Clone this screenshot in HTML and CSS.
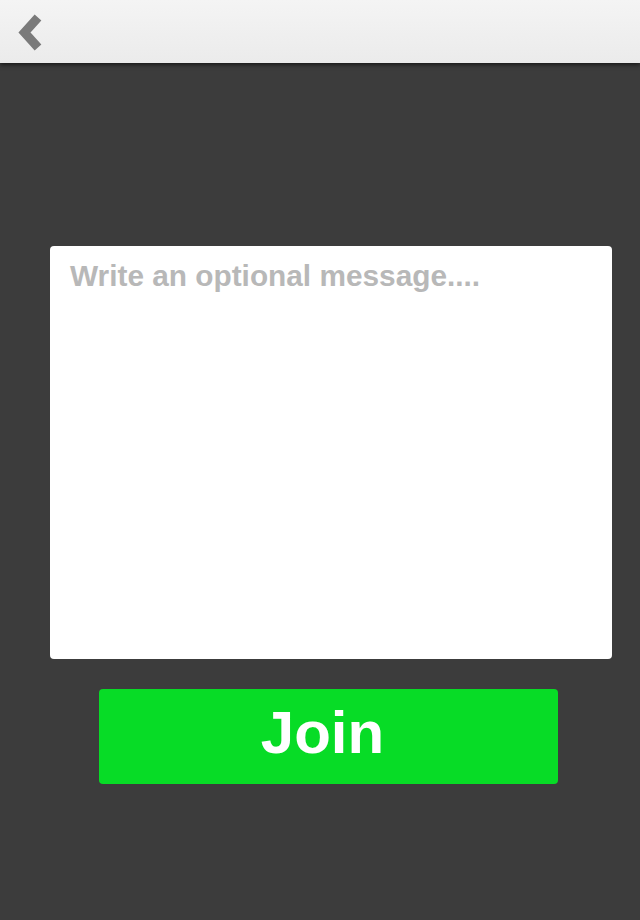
FILE: index.html
```html
<!DOCTYPE html>
<html>
<head>
<meta charset="utf-8">
<link rel="stylesheet" href="styles.css">
</head>
<body>
<header class="topbar">
  <button class="back" aria-label="Back">
    <svg width="50" height="63" viewBox="0 0 50 63">
      <polyline points="38,17.5 24.5,32.5 38,47.5" fill="none" stroke="#7a7a7a" stroke-width="9" stroke-linejoin="miter" stroke-linecap="butt"/>
    </svg>
  </button>
</header>
<main class="content">
  <div class="message">
    <div class="placeholder">Write an optional message....</div>
  </div>
  <button class="join">Join</button>
</main>
</body>
</html>
```
FILE: styles.css
```css
html, body {
  margin: 0;
  padding: 0;
  height: 100%;
}
body {
  background: #3c3c3c;
  font-family: "Liberation Sans", Arial, sans-serif;
  overflow: hidden;
}
.topbar {
  height: 63px;
  background: linear-gradient(#f4f4f4, #ebebeb);
  box-shadow: 0 2px 4px rgba(0,0,0,0.55);
  display: flex;
  align-items: stretch;
  position: relative;
  z-index: 1;
}
.back {
  border: 0;
  background: none;
  padding: 0;
  margin: 0;
  width: 50px;
  height: 63px;
  display: flex;
}
.content {
  padding-top: 183px;
  display: flex;
  flex-direction: column;
}
.message {
  margin-left: 50px;
  width: 562px;
  height: 413px;
  background: #fff;
  border-radius: 4px;
  box-sizing: border-box;
  padding: 13px 20px;
}
.placeholder {
  color: #b8b8b8;
  font-weight: bold;
  font-size: 29.8px;
  line-height: 34px;
}
.join {
  margin-top: 30px;
  margin-left: 99px;
  width: 459px;
  height: 95px;
  border: 0;
  border-radius: 4px;
  background: #07dc26;
  color: #fff;
  font-family: "Liberation Sans", Arial, sans-serif;
  font-weight: bold;
  font-size: 60px;
  line-height: 60px;
  padding: 0 12px 8px 0;
}
```
